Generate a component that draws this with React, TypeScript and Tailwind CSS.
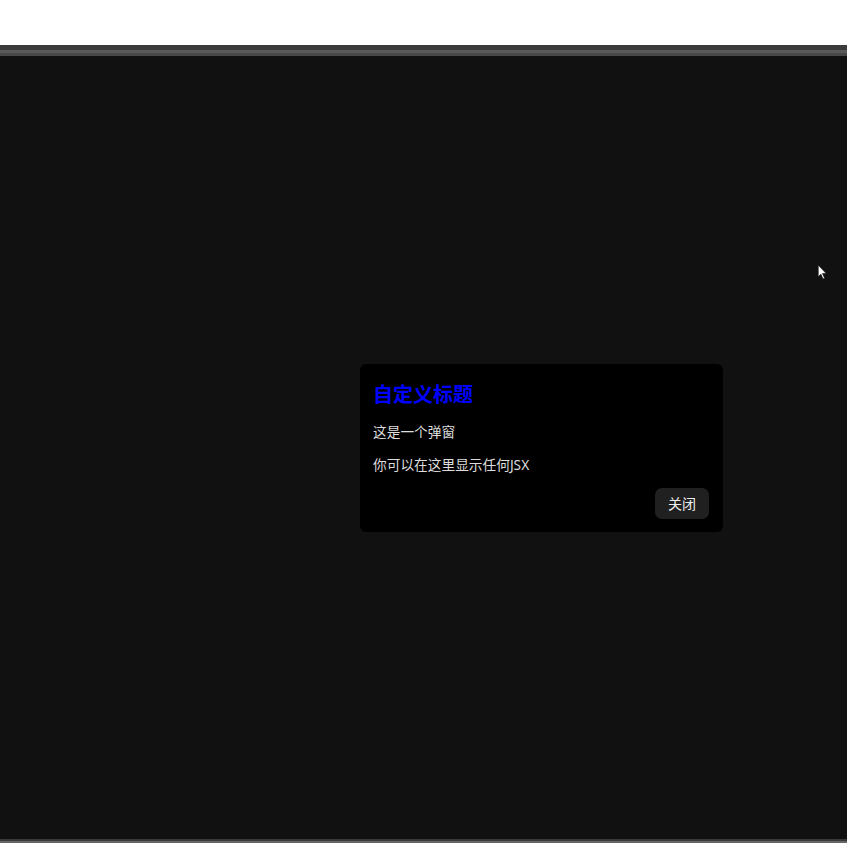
export default function App() {
  return (
    <div className="relative h-[864px] w-[864px] bg-white font-['Noto_Sans','Noto_Sans_CJK_SC',sans-serif]">
      <div className="h-[45px]" />
      <div className="flex h-[798px] w-[847px] flex-col bg-[#111111]">
        <div className="h-[5px] bg-[#3b3b3b]" />
        <div className="h-[3px] bg-[#5a5a5a]" />
        <div className="h-[3px] bg-[#484848]" />
        <div className="flex flex-1 flex-col pl-[360px] pt-[308px]">
          <div className="flex h-[168px] w-[363px] flex-col rounded-[6px] bg-black pb-[13px] pl-[13px] pr-[14px] pt-[17px]">
            <h2 className="text-[20px] font-bold leading-[28px] text-[#0000ff]">自定义标题</h2>
            <p className="mt-[13px] text-[13.7px] leading-[20px] text-[#dddddd]">这是一个弹窗</p>
            <p className="mt-[13px] text-[13.7px] leading-[20px] text-[#dddddd]">你可以在这里显示任何JSX</p>
            <div className="mt-auto flex justify-end">
              <button className="h-[31px] w-[54px] rounded-[7px] bg-[#202020] text-[14px] text-[#eeeeee]">
                关闭
              </button>
            </div>
          </div>
        </div>
        <div className="h-[2px] bg-[#3a3a3a]" />
        <div className="h-[2px] bg-[#666666]" />
      </div>
      <svg
        className="absolute left-[817px] top-[264px]"
        width="11"
        height="16"
        viewBox="0 0 10 15"
      >
        <path d="M1 1 L1 12 L3.5 9.5 L5.5 14 L7 13.3 L5 9 L8.5 9 Z" fill="#ffffff" stroke="#111111" strokeWidth="0.6" />
      </svg>
    </div>
  )
}
